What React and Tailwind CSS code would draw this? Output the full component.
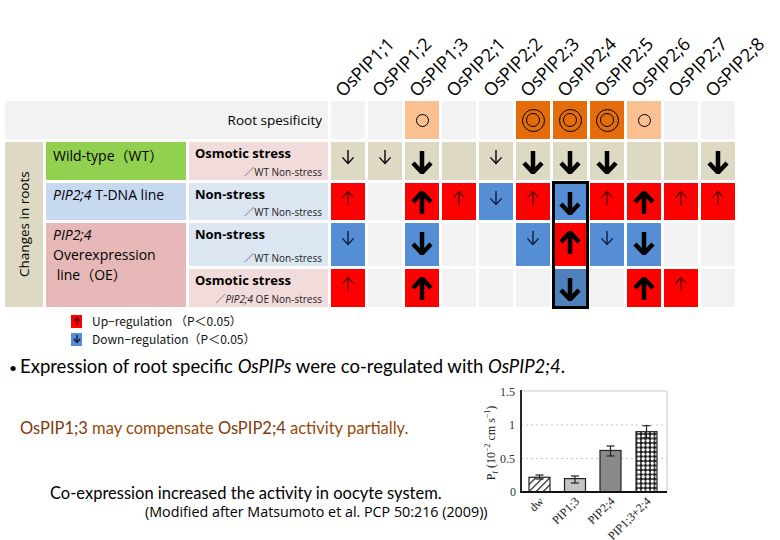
import React from "react";

const NAMES = [
  "OsPIP1;1", "OsPIP1;2", "OsPIP1;3", "OsPIP2;1", "OsPIP2;2", "OsPIP2;3",
  "OsPIP2;4", "OsPIP2;5", "OsPIP2;6", "OsPIP2;7", "OsPIP2;8",
];

// root specificity: o = single circle, O = double circle
const ROOT = ["", "", "o", "", "", "O", "O", "O", "o", "", ""];

// cell codes: bg letter + arrow. t=tan, e=empty gray, r=red, b=blue, d=dark blue
// arrows: "d"/"u" small, "D"/"U" big
const ROWS = [
  ["t:d", "t:d", "t:D", "t:", "t:d", "t:D", "t:D", "t:D", "t:", "t:", "t:D"],
  ["r:u", "e:", "r:U", "r:u", "b:d", "r:u", "b:D", "r:u", "r:U", "r:u", "r:u"],
  ["b:d", "e:", "b:D", "e:", "e:", "b:d", "r:U", "b:d", "b:D", "e:", "e:"],
  ["r:u", "e:", "r:U", "e:", "e:", "e:", "d:D", "e:", "r:U", "r:u", "e:"],
];

const BG = {
  t: "bg-[#ddd9c3]",
  e: "bg-[#f2f2f2]",
  r: "bg-[#ff0000]",
  b: "bg-[#558ed5]",
  d: "bg-[#4f81bd]",
};

function Arrow({ dir, big, color, w: ww, h: hh }) {
  const w = ww || (big ? 22 : 14);
  const h = hh || (big ? 24 : 16);
  const cx = w / 2;
  const sw = big ? 4.5 : 1.4;
  const head = big ? 9 : w * 0.4;
  return (
    <svg width={w} height={h} viewBox={`0 0 ${w} ${h}`} className={dir === "u" ? "rotate-180" : ""}>
      <line x1={cx} y1={1} x2={cx} y2={h - 2} stroke={color} strokeWidth={sw} />
      <polyline
        points={`${cx - head},${h - 2 - head} ${cx},${h - 1.5} ${cx + head},${h - 2 - head}`}
        fill="none"
        stroke={color}
        strokeWidth={sw}
        strokeLinejoin="miter"
      />
    </svg>
  );
}

function DataCell({ code }) {
  const [bg, ar] = code.split(":");
  const big = ar === "D" || ar === "U";
  let arrow = null;
  if (ar) {
    let color = "#000";
    if (!big && bg === "r") color = "#5c0000";
    if (!big && bg === "b") color = "#0d1b3d";
    arrow = <Arrow dir={ar.toLowerCase()} big={big} color={color} />;
  }
  return (
    <div className={`${BG[bg]} flex justify-center ${big ? "pt-[8px]" : "pt-[7px]"}`}>
      {arrow}
    </div>
  );
}

function RootCell({ v }) {
  if (v === "o")
    return (
      <div className="bg-[#fac090] flex items-center justify-center">
        <div className="w-[13px] h-[13px] rounded-full border-[1.5px] border-black" />
      </div>
    );
  if (v === "O")
    return (
      <div className="bg-[#e46c0a] flex items-center justify-center">
        <div className="w-[23px] h-[23px] rounded-full border-[1.5px] border-black flex items-center justify-center">
          <div className="w-[14px] h-[14px] rounded-full border-[1.5px] border-black" />
        </div>
      </div>
    );
  return <div className="bg-[#f2f2f2]" />;
}

function Cond({ title, sub, bg }) {
  return (
    <div className={`${bg} flex flex-col justify-between pl-[6px] pr-[6px] pt-[2px] pb-[1px]`}>
      <span className="text-[13px] font-bold text-black leading-[18px]">{title}</span>
      <span className="self-end text-[10px] leading-[13px] text-[#222]">{sub}</span>
    </div>
  );
}

function Chart() {
  const bars = [
    { x: 59, v: 0.22, e: [95, 99], fill: "url(#hatch)", label: "dw" },
    { x: 94.5, v: 0.2, e: [96, 103], fill: "#c4c4c4", label: "PIP1;3" },
    { x: 130, v: 0.62, e: [66, 76], fill: "#8a8a8a", label: "PIP2;4" },
    { x: 166, v: 0.9, e: [45.7, 57.7], fill: "url(#dots)", label: "PIP1;3+2;4" },
  ];
  return (
    <svg width="210" height="160" viewBox="0 0 210 160" className="shrink-0" style={{ fontFamily: '"Liberation Serif", serif' }}>
      <defs>
        <pattern id="hatch" width="5" height="5" patternUnits="userSpaceOnUse" patternTransform="rotate(45)">
          <rect width="5" height="5" fill="#fff" />
          <line x1="0" y1="0" x2="0" y2="5" stroke="#111" strokeWidth="2.4" />
        </pattern>
        <pattern id="dots" width="4.5" height="4.5" patternUnits="userSpaceOnUse">
          <rect width="4.5" height="4.5" fill="#1a1a1a" />
          <circle cx="2.25" cy="2.25" r="1.7" fill="#fff" />
        </pattern>
      </defs>
      <line x1="51" y1="11" x2="197" y2="11" stroke="#c8c8c8" strokeWidth="1" />
      <line x1="197" y1="11" x2="197" y2="112" stroke="#c8c8c8" strokeWidth="1" />
      <line x1="51" y1="45" x2="197" y2="45" stroke="#c8c8c8" strokeWidth="1.2" strokeDasharray="2 3" />
      <line x1="51" y1="78.5" x2="197" y2="78.5" stroke="#c8c8c8" strokeWidth="1.2" strokeDasharray="2 3" />
      {bars.map((b) => {
        const top = 112 - b.v * 67;
        const cx = b.x + 10.5;
        return (
          <g key={b.label}>
            <rect x={b.x} y={top} width="21" height={112 - top} fill={b.fill} stroke="#222" strokeWidth="1.2" />
            <line x1={cx} y1={b.e[0]} x2={cx} y2={b.e[1]} stroke="#222" strokeWidth="1.2" />
            <line x1={cx - 4} y1={b.e[0]} x2={cx + 4} y2={b.e[0]} stroke="#222" strokeWidth="1.2" />
            <line x1={cx - 4} y1={b.e[1]} x2={cx + 4} y2={b.e[1]} stroke="#222" strokeWidth="1.2" />
            <text x={cx + 5} y={122} fontSize="12" textAnchor="end" fill="#222" transform={`rotate(-45 ${cx + 5} 122)`}>
              {b.label}
            </text>
          </g>
        );
      })}
      <line x1="51" y1="10" x2="51" y2="113" stroke="#111" strokeWidth="1.8" />
      <line x1="50" y1="112" x2="197" y2="112" stroke="#111" strokeWidth="1.8" />
      <g fontSize="12" fill="#333" textAnchor="end">
        <text x="45" y="15.5">1.5</text>
        <text x="45" y="49">1</text>
        <text x="45" y="82.5">0.5</text>
        <text x="46" y="116">0</text>
      </g>
      <text transform="rotate(-90 25 63)" x="25" y="63" fontSize="12" fill="#222" textAnchor="middle">
        P<tspan fontSize="8" dy="3">f</tspan>
        <tspan dy="-3"> (10</tspan>
        <tspan fontSize="8" dy="-5">−2</tspan>
        <tspan dy="5"> cm s</tspan>
        <tspan fontSize="8" dy="-5">−1</tspan>
        <tspan dy="5">)</tspan>
      </text>
    </svg>
  );
}

export default function App() {
  const sans = { fontFamily: '"Open Sans", "Noto Sans CJK JP", sans-serif' };
  return (
    <div className="w-[780px] h-[540px] bg-white overflow-hidden text-black" style={sans}>
      {/* Column headers */}
      <div className="h-[101px] flex items-end gap-[3px] pl-[331px]">
        {NAMES.map((n) => (
          <div key={n} className="w-[34px] shrink-0 h-full flex items-end pl-[14px] pb-[1px]">
            <span className="block whitespace-nowrap origin-bottom-left rotate-[-45deg] text-[18px] leading-[20px] text-black">
              {n}
            </span>
          </div>
        ))}
      </div>

      {/* Table */}
      <div className="relative ml-[5px]">
        <div className="grid grid-cols-[38px_140px_139px_repeat(11,34px)] grid-rows-[38px_38px_37px_43px_38px] gap-[3px]">
          <div className="col-span-3 bg-[#f2f2f2] flex items-center justify-end pr-[6px] text-[13.5px]">
            Root spesificity
          </div>
          {ROOT.map((v, i) => (
            <RootCell key={i} v={v} />
          ))}

          <div className="row-span-4 bg-[#ddd9c3] flex items-center justify-center">
            <span className="-rotate-90 whitespace-nowrap text-[13.5px]">Changes in roots</span>
          </div>
          <div className="bg-[#92d050] pl-[7px] pt-[4px] text-[14px] leading-[20px]">Wild-type（WT）</div>
          <Cond title="Osmotic stress" sub="／WT Non-stress" bg="bg-[#f2dcdb]" />
          {ROWS[0].map((c, i) => (
            <DataCell key={i} code={c} />
          ))}

          <div className="bg-[#c6d9f1] pl-[7px] pt-[2px] text-[14px] leading-[20px]">
            <i>PIP2;4</i> T-DNA line
          </div>
          <Cond title="Non-stress" sub="／WT Non-stress" bg="bg-[#dce6f2]" />
          {ROWS[1].map((c, i) => (
            <DataCell key={i} code={c} />
          ))}

          <div className="row-span-2 bg-[#e6b9b8] pl-[7px] pt-[2px] text-[14px] leading-[20px]">
            <i>PIP2;4</i>
            <br />
            Overexpression
            <br />
            &nbsp;line（OE）
          </div>
          <Cond title="Non-stress" sub="／WT Non-stress" bg="bg-[#dce6f2]" />
          {ROWS[2].map((c, i) => (
            <DataCell key={i} code={c} />
          ))}

          <Cond
            title="Osmotic stress"
            sub={
              <>
                ／<i>PIP2;4</i> OE Non-stress
              </>
            }
            bg="bg-[#f2dcdb]"
          />
          {ROWS[3].map((c, i) => (
            <DataCell key={i} code={c} />
          ))}
        </div>
        {/* highlight box over OsPIP2;4 column */}
        <div className="absolute left-[547px] top-[80px] w-[37px] h-[128px] border-[3px] border-black pointer-events-none" />
      </div>

      {/* Legend */}
      <div className="ml-[71px] mt-[5px] text-[12px] leading-[18px] text-[#111]" style={{ fontFamily: '"Noto Sans CJK JP", sans-serif' }}>
        <div className="flex items-center gap-[10px]">
          <div className="w-[11px] h-[13px] bg-[#ff0000] flex justify-center pt-[1px]">
            <Arrow dir="u" big={false} color="#5c0000" w={8} h={10} />
          </div>
          <span>Up−regulation （P＜0.05）</span>
        </div>
        <div className="flex items-center gap-[10px]">
          <div className="w-[11px] h-[13px] bg-[#558ed5] flex justify-center pt-[1px]">
            <Arrow dir="d" big={false} color="#0d1b3d" w={8} h={10} />
          </div>
          <span>Down−regulation（P＜0.05）</span>
        </div>
      </div>

      {/* Bullet */}
      <div className="mt-[8px] flex items-center h-[22px] text-[18.5px]" style={{ fontFamily: "Lato, sans-serif" }}>
        <span className="w-[20px] pl-[9px] text-[14px]">•</span>
        <span>
          Expression of root specific <i>OsPIPs</i> were co-regulated with <i>OsPIP2;4</i>.
        </span>
      </div>

      {/* Bottom */}
      <div className="flex">
        <div className="w-[470px] shrink-0" style={{ fontFamily: "Lato, sans-serif" }}>
          <p className="pl-[20px] pt-[40px] text-[16.5px] leading-[20px] text-[#984807]">
            <span className="text-[#7f3a10]">OsPIP1;3</span> may compensate{" "}
            <span className="text-[#7f3a10]">OsPIP2;4</span> activity partially.
          </p>
          <p className="pl-[50px] mt-[45px] text-[16.5px] leading-[20px]">
            Co-expression increased the activity in oocyte system.
          </p>
          <p className="pl-[145px] whitespace-nowrap text-[14.3px] leading-[18px]" style={{ fontFamily: '"Open Sans", sans-serif' }}>
            (Modified after Matsumoto et al. PCP 50:216 (2009))
          </p>
        </div>
        <div className="mt-[2px]">
          <Chart />
        </div>
      </div>
    </div>
  );
}
